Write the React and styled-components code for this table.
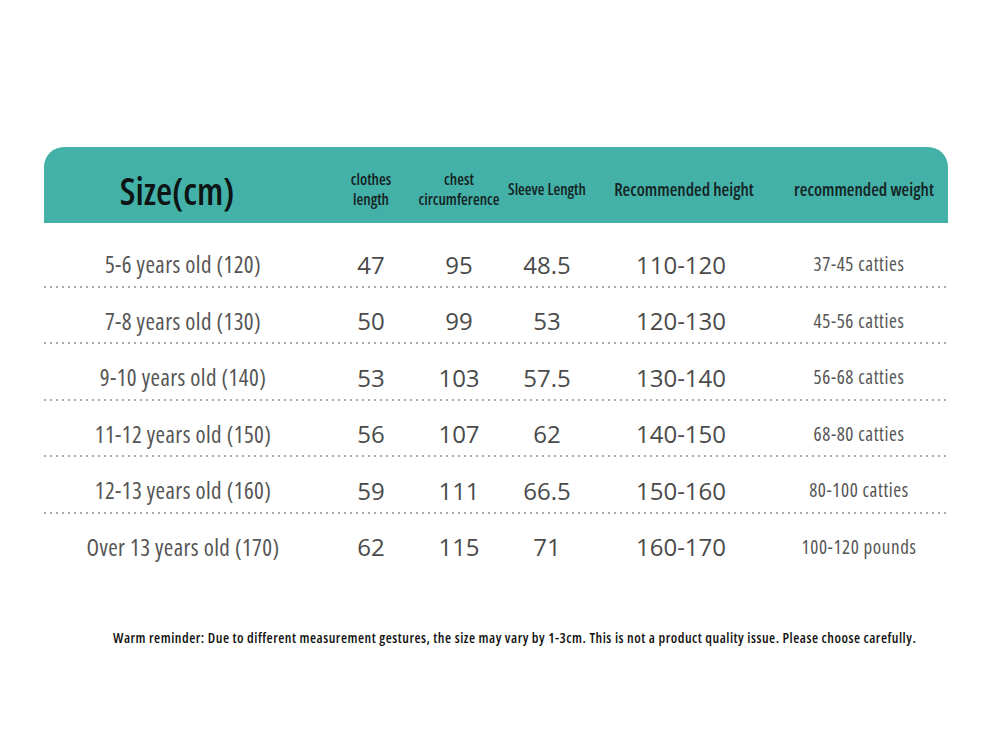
import React from "react";
import styled, { createGlobalStyle } from "styled-components";

const GlobalStyle = createGlobalStyle`
  body {
    margin: 0;
    background: #ffffff;
  }
`;

const condensed = `"Open Sans", "Roboto", sans-serif`;
const rounded = `"Open Sans", "Noto Sans", sans-serif`;

const columns = "286px 82px 94px 82px 192px 168px";

const Styled = {
  Page: styled.div`
    width: 992px;
    height: 744px;
    padding: 147px 44px 0;
    box-sizing: border-box;
  `,
  Header: styled.div`
    display: grid;
    grid-template-columns: ${columns};
    height: 76px;
    padding-top: 7px;
    box-sizing: border-box;
    align-items: center;
    background: #44b1a8;
    border-radius: 20px 20px 0 0;
    font-family: ${condensed};
    font-stretch: condensed;
    font-weight: 600;
    color: #142424;
  `,
  Title: styled.div`
    padding: 4px 20px 0 0;
    text-align: center;
    font-size: 37px;
    font-weight: 600;
    color: #0c1414;
  `,
  HeadCell: styled.div`
    display: flex;
    justify-content: center;
    text-align: center;
    font-size: ${(p) => p.$size || 15.5}px;
    line-height: 20px;
    white-space: nowrap;
  `,
  Body: styled.div`
    margin-top: 8px;
  `,
  Row: styled.div`
    display: grid;
    grid-template-columns: ${columns};
    height: 56.5px;
    align-items: center;
    padding-top: 10px;
    box-sizing: border-box;
    color: #555555;
    background-image: ${(p) =>
      p.$last
        ? "none"
        : "repeating-linear-gradient(90deg, #a9a9a9 0 2px, transparent 2px 6px)"};
    background-size: 100% 2px;
    background-position: 0 100%;
    background-repeat: no-repeat;
  `,
  AgeCell: styled.div`
    padding-right: 8px;
    text-align: center;
    font-family: ${condensed};
    font-stretch: condensed;
    font-size: 23px;
    letter-spacing: 0.4px;
  `,
  NumCell: styled.div`
    display: flex;
    justify-content: center;
    font-family: ${rounded};
    font-size: 24px;
    color: #4a4a4a;
    padding-right: ${(p) => p.$shift || 0}px;
  `,
  WeightCell: styled.div`
    display: flex;
    justify-content: center;
    padding-right: 10px;
    font-family: ${condensed};
    font-stretch: condensed;
    font-size: 19px;
    letter-spacing: 0.6px;
  `,
  Note: styled.p`
    margin: 58px 0 0 69px;
    font-family: ${condensed};
    font-stretch: condensed;
    font-weight: 600;
    font-size: 14px;
    letter-spacing: 0.5px;
    color: #111111;
    white-space: nowrap;
  `,
};

const rows = [
  ["5-6 years old (120)", "47", "95", "48.5", "110-120", "37-45 catties"],
  ["7-8 years old (130)", "50", "99", "53", "120-130", "45-56 catties"],
  ["9-10 years old (140)", "53", "103", "57.5", "130-140", "56-68 catties"],
  ["11-12 years old (150)", "56", "107", "62", "140-150", "68-80 catties"],
  ["12-13 years old (160)", "59", "111", "66.5", "150-160", "80-100 catties"],
  ["Over 13 years old (170)", "62", "115", "71", "160-170", "100-120 pounds"],
];

const App = () => {
  return (
    <Styled.Page>
      <GlobalStyle />
      <Styled.Header>
        <Styled.Title>Size(cm)</Styled.Title>
        <Styled.HeadCell>
          clothes
          <br />
          length
        </Styled.HeadCell>
        <Styled.HeadCell>
          chest
          <br />
          circumference
        </Styled.HeadCell>
        <Styled.HeadCell>Sleeve Length</Styled.HeadCell>
        <Styled.HeadCell $size={17.5}>Recommended height</Styled.HeadCell>
        <Styled.HeadCell $size={17.5}>recommended weight</Styled.HeadCell>
      </Styled.Header>
      <Styled.Body>
        {rows.map((row, i) => (
          <Styled.Row key={row[0]} $last={i === rows.length - 1}>
            <Styled.AgeCell>{row[0]}</Styled.AgeCell>
            <Styled.NumCell>{row[1]}</Styled.NumCell>
            <Styled.NumCell>{row[2]}</Styled.NumCell>
            <Styled.NumCell>{row[3]}</Styled.NumCell>
            <Styled.NumCell $shift={6}>{row[4]}</Styled.NumCell>
            <Styled.WeightCell>{row[5]}</Styled.WeightCell>
          </Styled.Row>
        ))}
      </Styled.Body>
      <Styled.Note>
        Warm reminder: Due to different measurement gestures, the size may vary
        by 1-3cm. This is not a product quality issue. Please choose carefully.
      </Styled.Note>
    </Styled.Page>
  );
};

export default App;
